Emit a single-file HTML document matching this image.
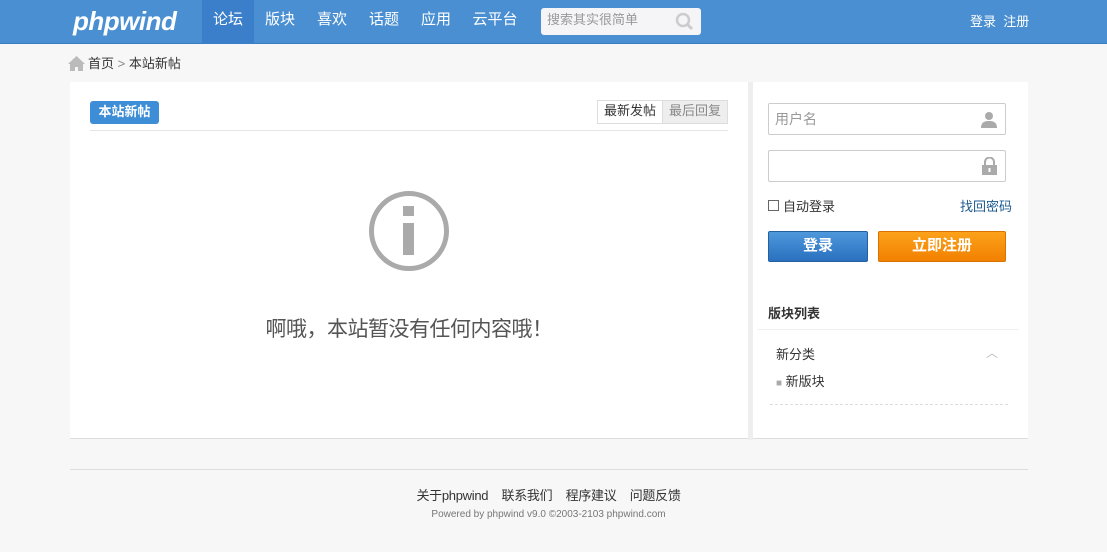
<!DOCTYPE html>
<html><head><meta charset="utf-8"><style>
*{margin:0;padding:0;box-sizing:border-box}
body{width:1107px;height:552px;background:#f7f7f7;font-family:"Liberation Sans","Noto Sans CJK SC",sans-serif;font-size:13px;color:#333;position:relative;overflow:hidden}
.hd{position:absolute;left:0;top:0;width:1107px;height:44px;background:#4a8fd2;border-bottom:1px solid #3c7cc0}
.logo{position:absolute;left:73px;top:6px;color:#fff;font-style:italic;font-weight:bold;font-size:26px;letter-spacing:-0.5px}
.nav a{position:absolute;top:0;height:44px;line-height:40px;color:#fff;font-size:15px;text-align:center}
.srch{position:absolute;left:541px;top:8px;width:160px;height:27px;background:#f5f5f8;border-radius:3px;color:#999;font-size:13px;line-height:24px;padding-left:6px}
.a{position:absolute}
.main{position:absolute;left:70px;top:82px;width:678px;height:357px;background:#fff;border-bottom:1px solid #ddd}
.side{position:absolute;left:753px;top:82px;width:275px;height:357px;background:#fff;border-bottom:1px solid #ddd}
.inp{position:absolute;left:15px;width:238px;height:32px;border:1px solid #ccc;border-radius:2px;background:#fff}
</style></head><body>
<div class="hd">
<div class="logo">phpwind</div>
<div class="nav">
<a style="left:202px;width:52px;background:#3b7fcb">论坛</a>
<a style="left:254px;width:52px">版块</a>
<a style="left:306px;width:52px">喜欢</a>
<a style="left:358px;width:52px">话题</a>
<a style="left:410px;width:52px">应用</a>
<a style="left:462px;width:66px">云平台</a>
</div>
<div class="srch">搜索其实很简单
<svg class="a" style="left:134px;top:4px" width="20" height="20" viewBox="0 0 20 20"><circle cx="8" cy="8" r="6" fill="none" stroke="#ccc" stroke-width="2.5"/><path d="M12 12l5 5" stroke="#ccc" stroke-width="3"/></svg></div>
<div class="a" style="left:970px;top:11px;color:#fff;font-size:13px">登录 &nbsp;注册</div>
</div>
<svg class="a" style="left:68px;top:56px" width="17" height="15" viewBox="0 0 17 15"><path d="M8.5 0L0 8h2v7h5v-4h3v4h5V8h2z" fill="#bbb"/></svg>
<div class="a" style="left:88px;top:53px;font-size:13px">首页 <span style="color:#888">&gt;</span> 本站新帖</div>

<div class="main">
<div class="a" style="left:20px;top:19px;width:69px;height:23px;background:#3d8ed6;border-radius:3px;color:#fff;font-weight:bold;text-align:center;line-height:21px">本站新帖</div>
<div class="a" style="left:527px;top:18px;width:131px;height:24px;border:1px solid #ddd;background:#fff;line-height:20px;font-size:13px">
<span class="a" style="left:0;width:64px;text-align:center">最新发帖</span>
<span class="a" style="left:64px;width:65px;text-align:center;background:#eee;color:#888;border-left:1px solid #ddd;height:22px">最后回复</span></div>
<div class="a" style="left:20px;top:48px;width:638px;border-top:1px solid #e4e4e4"></div>
<svg class="a" style="left:298px;top:108px" width="82" height="82" viewBox="0 0 82 82"><circle cx="41" cy="41" r="37.5" fill="none" stroke="#aaa" stroke-width="5"/><rect x="35" y="16" width="11" height="10" fill="#aaa"/><rect x="35" y="33" width="11" height="32" fill="#aaa"/></svg>
<div class="a" style="left:0;width:678px;top:231px;text-align:center;font-size:21px;color:#555;letter-spacing:-0.5px">啊哦，本站暂没有任何内容哦！</div>
</div>
<div class="a" style="left:748px;top:82px;width:5px;height:358px;background:#eee"></div>
<div class="side">
<div class="inp" style="top:21px"><span class="a" style="left:6px;top:5px;color:#999;font-size:14px">用户名</span>
<svg class="a" style="left:212px;top:7px" width="16" height="17" viewBox="0 0 16 17"><circle cx="8" cy="5" r="4" fill="#aaa"/><path d="M0 17c0-6 4-7 8-7s8 1 8 7z" fill="#aaa"/></svg></div>
<div class="inp" style="top:68px"><svg class="a" style="left:213px;top:6px" width="15" height="18" viewBox="0 0 15 18"><path d="M3 8V5a4.5 4.5 0 019 0v3" fill="none" stroke="#aaa" stroke-width="2"/><rect x="0" y="8" width="15" height="10" fill="#aaa"/><rect x="6.5" y="11" width="2" height="4" fill="#fff"/></svg></div>
<div class="a" style="left:15px;top:118px;width:11px;height:11px;border:1px solid #666"></div>
<div class="a" style="left:30px;top:114px;font-size:13px">自动登录</div>
<div class="a" style="left:207px;top:114px;font-size:13px;color:#1d5a8f">找回密码</div>
<div class="a" style="left:15px;top:149px;width:100px;height:31px;background:linear-gradient(#4e98dc,#2a70bf);border:1px solid #25609f;border-radius:2px;color:#fff;text-align:center;line-height:27px;font-size:15px;font-weight:bold">登录</div>
<div class="a" style="left:125px;top:149px;width:128px;height:31px;background:linear-gradient(#fca21a,#f28000);border:1px solid #d87200;border-radius:2px;color:#fff;text-align:center;line-height:27px;font-size:15px;font-weight:bold">立即注册</div>
<div class="a" style="left:15px;top:221px;font-weight:bold;font-size:13px">版块列表</div>
<div class="a" style="left:5px;top:247px;width:260px;border-top:1px solid #eee"></div>
<div class="a" style="left:23px;top:262px">新分类</div>
<div class="a" style="left:233px;top:262px;color:#bbb;font-size:12px">︿</div>
<div class="a" style="left:23px;top:289px"><span style="color:#aaa;font-size:10px">■</span> 新版块</div>
<div class="a" style="left:17px;top:322px;width:238px;border-top:1px dashed #ddd"></div>
</div>
<div class="a" style="left:70px;top:469px;width:958px;border-top:1px solid #ddd"></div>
<div class="a" style="left:0;width:1097px;top:485px;text-align:center;font-size:13px;word-spacing:10px;letter-spacing:-0.3px">关于phpwind 联系我们 程序建议 问题反馈</div>
<div class="a" style="left:0;width:1097px;top:509px;text-align:center;font-size:10px;color:#777">Powered by phpwind v9.0 ©2003-2103 phpwind.com</div>
</body></html>
